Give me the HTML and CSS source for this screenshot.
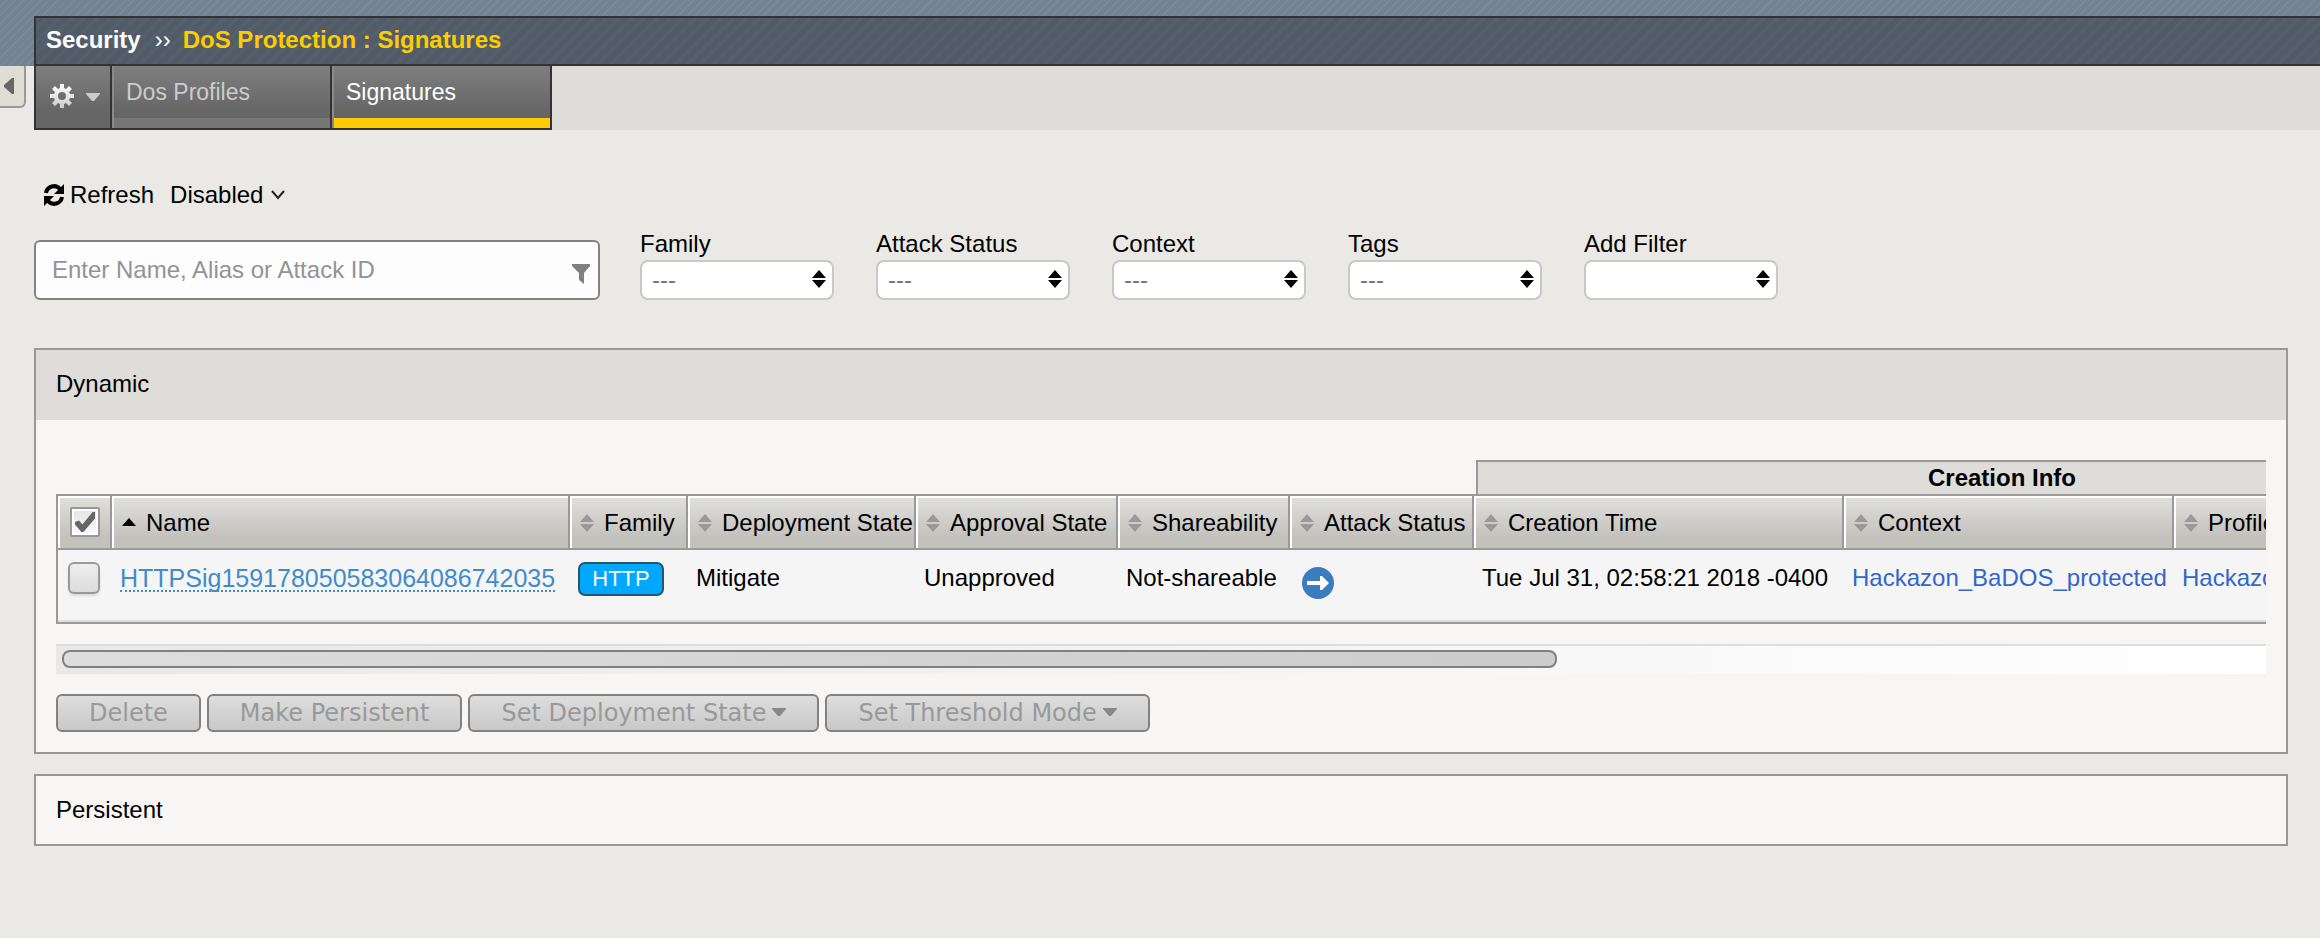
FILE: index.html
```html
<!DOCTYPE html>
<html lang="en">
<head>
<meta charset="utf-8">
<title>DoS Protection : Signatures</title>
<link rel="stylesheet" href="styles.css">
</head>
<body>
<svg class="defs" width="0" height="0" aria-hidden="true">
  <symbol id="sort" viewBox="0 0 14 18"><path d="M7 0l7 8H0zM7 18l7-8H0z"/></symbol>
  <symbol id="caret" viewBox="0 0 14 10"><path d="M0 0h14v1L8 8H6L0 1z"/></symbol>
  <linearGradient id="steel" x1="0" y1="0" x2="0" y2="1"><stop offset="0" stop-color="#fff"/><stop offset="1" stop-color="#ccc"/></linearGradient>
</svg>
<div class="top">
  <header class="titlebar">
    <h1 class="crumbs"><span>Security</span><span class="sep">››</span><span class="current">DoS Protection : Signatures</span></h1>
  </header>
</div>
<div class="tabrow">
  <button class="collapse" aria-label="Collapse menu"><svg width="10" height="16" viewBox="0 0 10 16"><path d="M0 7v2l8 7h2V0H8z"/></svg></button>
  <nav class="tabs">
    <button class="tab gear" aria-label="Options">
      <svg width="26" height="26" viewBox="0 0 26 26"><path fill="url(#steel)" fill-rule="evenodd" d="M11 1h4v4l2 1 3-3 3 3-3 3 1 2h4v4h-4l-1 2 3 3-3 3-3-3-2 1v4h-4v-4l-2-1-3 3-3-3 3-3-1-2H1v-4h4l1-2-3-3 3-3 3 3 2-1zM13 9a4 4 0 1 0 0 8 4 4 0 0 0 0-8z"/></svg>
      <svg class="gearcaret" width="14" height="10"><use href="#caret"/></svg>
    </button>
    <a class="tab" href="#profiles">Dos Profiles</a>
    <a class="tab active" href="#signatures">Signatures</a>
  </nav>
</div>
<main>
  <div class="tools">
    <button class="tool"><svg width="22" height="24" viewBox="0 0 22 24"><path d="M3 10a8 8 0 0 1 14-4M19 14a8 8 0 0 1-14 4" fill="none" stroke="#000" stroke-width="4"/><path d="M21 1v10H11zM1 23V13h10z"/></svg>Refresh</button>
    <button class="tool">Disabled<svg class="chev" width="14" height="10" viewBox="0 0 14 10"><path d="M1 1l6 7 6-7" fill="none" stroke="#222" stroke-width="2"/></svg></button>
  </div>
  <div class="filters">
    <label class="search">
      <input type="text" placeholder="Enter Name, Alias or Attack ID" aria-label="Search signatures">
      <svg width="20" height="22" viewBox="0 0 20 22"><path d="M1 1h18v2l-6 7v11l-5-4v-7L1 3z"/></svg>
    </label>
    <label class="filter">Family<span class="pick"><select><option>---</option></select><svg width="14" height="18"><use href="#sort"/></svg></span></label>
    <label class="filter">Attack Status<span class="pick"><select><option>---</option></select><svg width="14" height="18"><use href="#sort"/></svg></span></label>
    <label class="filter">Context<span class="pick"><select><option>---</option></select><svg width="14" height="18"><use href="#sort"/></svg></span></label>
    <label class="filter">Tags<span class="pick"><select><option>---</option></select><svg width="14" height="18"><use href="#sort"/></svg></span></label>
    <label class="filter">Add Filter<span class="pick"><select><option></option></select><svg width="14" height="18"><use href="#sort"/></svg></span></label>
  </div>
  <section class="panel">
    <h2 class="panelhead">Dynamic</h2>
    <div class="panelbody">
      <div class="scroller">
        <table>
          <colgroup><col class="c-check"><col class="c-name"><col class="c-family"><col class="c-deploy"><col class="c-approval"><col class="c-share"><col class="c-attack"><col class="c-time"><col class="c-context"><col class="c-profile"></colgroup>
          <thead>
            <tr class="groups"><td colspan="7"></td><th colspan="3"><div>Creation Info</div></th></tr>
            <tr class="heads">
              <th class="check"><input type="checkbox" class="all" checked aria-label="Select all"></th>
              <th><span class="head"><svg width="14" height="18" viewBox="0 0 14 18"><path d="M7 4l7 8H0z" fill="#000"/></svg>Name</span></th>
              <th><span class="head"><svg width="14" height="18"><use href="#sort"/></svg>Family</span></th>
              <th><span class="head"><svg width="14" height="18"><use href="#sort"/></svg>Deployment State</span></th>
              <th><span class="head"><svg width="14" height="18"><use href="#sort"/></svg>Approval State</span></th>
              <th><span class="head"><svg width="14" height="18"><use href="#sort"/></svg>Shareability</span></th>
              <th><span class="head"><svg width="14" height="18"><use href="#sort"/></svg>Attack Status</span></th>
              <th><span class="head"><svg width="14" height="18"><use href="#sort"/></svg>Creation Time</span></th>
              <th><span class="head"><svg width="14" height="18"><use href="#sort"/></svg>Context</span></th>
              <th><span class="head"><svg width="14" height="18"><use href="#sort"/></svg>Profile</span></th>
            </tr>
          </thead>
          <tbody>
            <tr>
              <td class="check"><input type="checkbox" aria-label="Select signature"></td>
              <td><a class="sig" href="#sig">HTTPSig159178050583064086742035</a></td>
              <td><span class="badge">HTTP</span></td>
              <td>Mitigate</td>
              <td>Unapproved</td>
              <td>Not-shareable</td>
              <td><svg class="arrow" width="34" height="34" viewBox="0 0 34 34"><circle cx="17" cy="17" r="16" fill="#3b7bbf"/><path d="M6 15h13v-5l2 0 7 7-7 7h-2v-5H6z" fill="#fff"/></svg></td>
              <td>Tue Jul 31, 02:58:21 2018 -0400</td>
              <td><a class="obj" href="#context">Hackazon_BaDOS_protected</a></td>
              <td><a class="obj" href="#profile">Hackazon_BaDOS</a></td>
            </tr>
          </tbody>
        </table>
      </div>
      <div class="track"><div class="thumb"></div></div>
      <div class="actions">
        <button disabled>Delete</button>
        <button disabled>Make Persistent</button>
        <button disabled>Set Deployment State<svg width="14" height="10"><use href="#caret"/></svg></button>
        <button disabled>Set Threshold Mode<svg width="14" height="10"><use href="#caret"/></svg></button>
      </div>
    </div>
  </section>
  <section class="panel persistent">
    <h2 class="panelhead">Persistent</h2>
  </section>
</main>
</body>
</html>
```
FILE: styles.css
```css
* { box-sizing: border-box; }
body {
  margin: 0;
  background: #eae9e5;
  color: #000;
  font: 24px/28px "Liberation Sans", Arial, sans-serif;
}
button, input, select { font: inherit; color: inherit; margin: 0; }
button { border: 0; background: none; padding: 0; }
h1, h2 { margin: 0; font-size: 24px; }
a { text-decoration: none; }
svg { flex: none; display: block; }
.defs { position: absolute; }

.top {
  padding: 16px 0 0 34px;
  background: repeating-linear-gradient(135deg, #728293 0 4px, #798998 4px 6px);
}
.titlebar {
  height: 50px;
  border: 2px solid #333;
  border-right: 0;
  padding: 8px 10px;
  background: repeating-linear-gradient(135deg, #515c68 0 6px, #56606c 6px 9px);
}
.crumbs { display: flex; color: #fff; }
.sep { margin: 0 12px 0 14px; font-weight: 400; }
.current { color: #fc0; }

.tabrow { display: flex; height: 64px; }
.collapse {
  width: 26px;
  height: 42px;
  margin-right: 8px;
  padding-left: 4px;
  border: 2px solid #999;
  border-width: 0 2px 2px 0;
  border-radius: 0 0 6px 0;
  background: #deddd4;
  fill: #666;
}
.tabs { display: flex; flex: 1; background: #deddd9; }
.tab {
  width: 220px;
  padding: 12px 14px;
  color: #ccc;
  font-size: 23px;
  border: solid #333;
  border-width: 0 2px 2px 0;
  background: linear-gradient(#7e7e7e, #666 46px);
  box-shadow: inset 2px 0 #8a8a8a, inset 0 -10px #777;
}
.tab.active { color: #fff; box-shadow: inset 2px 0 #8a8a8a, inset 0 -10px #fc0; }
.tab.gear {
  display: flex;
  align-items: center;
  gap: 11px;
  width: 78px;
  padding: 0 0 2px 13px;
  border-left-width: 2px;
  box-shadow: none;
  fill: #ccc;
}
.gearcaret { margin-top: 4px; }

main { padding: 50px 32px 0 34px; }
.tools { display: flex; gap: 16px; padding-left: 9px; }
.tool { display: flex; align-items: center; gap: 5px; height: 30px; }
.chev { margin-left: 3px; }
.filters { display: flex; align-items: flex-end; gap: 42px; margin-top: 18px; }
.search {
  display: flex;
  align-items: center;
  width: 566px;
  height: 60px;
  margin-right: -2px;
  padding: 0 7px 0 16px;
  border: 2px solid #828282;
  border-radius: 6px;
  background: #fdfdfd;
  fill: #808080;
}
.search input { flex: 1; min-width: 0; border: 0; padding: 0; background: none; outline: 0; }
.search input::placeholder { color: #939393; }
.search svg { margin-top: 8px; }
.filter { display: block; width: 194px; line-height: 32px; }
.pick { display: flex; position: relative; }
.pick select {
  appearance: none;
  width: 100%;
  height: 40px;
  padding: 0 10px;
  border: 2px solid #c8c8c8;
  border-radius: 8px;
  background: #fff;
  color: #777;
}
.pick svg { position: absolute; right: 8px; top: 10px; pointer-events: none; }

.panel { margin-top: 48px; border: 2px solid #999; background: #f7f6f5; }
.panelhead { padding: 20px; height: 70px; font-weight: 400; background: #deddd9; }
.persistent { margin-top: 20px; }
.persistent .panelhead { background: none; height: 68px; }
.panelbody { padding: 40px 20px 20px; }
.scroller { overflow: hidden; }
table { table-layout: fixed; width: 2472px; border-collapse: separate; border-spacing: 0; }
.c-check { width: 56px; }
.c-name { width: 458px; }
.c-family { width: 118px; }
.c-deploy { width: 228px; }
.c-approval { width: 202px; }
.c-share { width: 172px; }
.c-attack { width: 184px; }
.c-time { width: 370px; }
.c-context { width: 330px; }
.c-profile { width: 354px; }
td, th { padding: 0; text-align: left; font-weight: 400; white-space: nowrap; }
.groups th { padding-left: 2px; }
.groups div {
  height: 34px;
  padding-top: 2px;
  border: 2px solid #999;
  border-bottom: 0;
  background: #deddd9;
  font-weight: 700;
  text-align: center;
}
.heads th {
  height: 56px;
  padding: 2px 0 0 10px;
  border: solid #999;
  border-width: 2px 2px 2px 0;
  background: linear-gradient(#deddd9 10%, #d2d1cd 40%, #c2c1bc 80%);
  box-shadow: inset 2px 2px #fff;
}
.heads th.check { border-left-width: 2px; padding: 0 0 0 12px; }
.head { display: flex; align-items: center; gap: 10px; fill: #999; }
tbody td {
  height: 74px;
  padding: 14px 0 0 8px;
  vertical-align: top;
  background: #f5f5f5;
  border-bottom: 2px solid #999;
  box-shadow: inset 0 -2px #ddd;
}
tbody td.check { border-left: 2px solid #999; padding: 12px 0 0 10px; }
input[type="checkbox"] {
  appearance: none;
  display: block;
  width: 32px;
  height: 32px;
  border: 2px solid #999;
  border-radius: 6px;
  background: linear-gradient(#eee, #dcdcdc);
  box-shadow: 0 2px 2px #ddd;
}
input[type="checkbox"].all {
  display: grid;
  place-items: center;
  width: 30px;
  height: 30px;
  border-radius: 2px;
  background: linear-gradient(#e4e4e2, #fafafa);
  box-shadow: inset 0 0 0 2px #fff;
}
input.all::before {
  content: "";
  width: 20px;
  height: 20px;
  background: #666;
  clip-path: polygon(0 50%, 20% 42%, 37% 62%, 88% 0, 100% 0, 100% 32%, 42% 100%, 32% 100%, 0 62%);
}
.sig { display: inline-block; height: 28px; color: #428bca; font-size: 25px; border-bottom: 2px dotted #428bca; }
.obj { color: #36c; }
.badge {
  display: block;
  width: 86px;
  height: 34px;
  margin-top: -2px;
  border: 2px solid #2a5566;
  border-radius: 7px;
  background: #00a8ff;
  color: #fff;
  font-size: 22px;
  line-height: 30px;
  text-align: center;
}
.arrow { margin: 2px 0 0 3px; }

.track {
  margin-top: 20px;
  padding: 4px 6px 6px;
  border-top: 2px solid #ddd;
  background: linear-gradient(90deg, #e8e8e8, #fff);
}
.thumb {
  width: 68%;
  height: 18px;
  border: 2px solid #808080;
  border-radius: 8px;
  background: linear-gradient(90deg, #ddd, #ccc);
}
.actions { display: flex; gap: 6px; margin-top: 20px; }
.actions button {
  display: flex;
  align-items: center;
  gap: 6px;
  height: 38px;
  padding: 0 31px;
  border: 2px solid #828282;
  border-radius: 6px;
  background: linear-gradient(#dedede, #c8c8c8);
  color: #999;
  fill: #888;
  font-family: "DejaVu Sans", sans-serif;
  font-size: 24px;
}
```
